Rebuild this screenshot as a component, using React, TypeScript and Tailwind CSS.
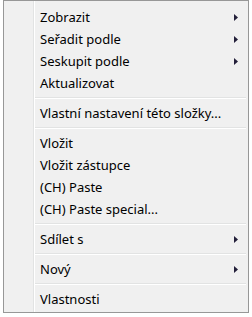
type Item = { label: string; sub?: boolean } | { sep: true };

const items: Item[] = [
  { label: "Zobrazit", sub: true },
  { label: "Seřadit podle", sub: true },
  { label: "Seskupit podle", sub: true },
  { label: "Aktualizovat" },
  { sep: true },
  { label: "Vlastní nastavení této složky..." },
  { sep: true },
  { label: "Vložit" },
  { label: "Vložit zástupce" },
  { label: "(CH) Paste" },
  { label: "(CH) Paste special..." },
  { sep: true },
  { label: "Sdílet s", sub: true },
  { sep: true },
  { label: "Nový", sub: true },
  { sep: true },
  { label: "Vlastnosti" },
];

function Arrow() {
  return (
    <svg width="4" height="7" viewBox="0 0 4 7" className="block">
      <polygon points="0,0 4,3.5 0,7" fill="#231f3a" />
    </svg>
  );
}

export default function App() {
  return (
    <div className="w-[252px] h-[317px] bg-white">
      <div
        className="ml-[3px] w-[246px] h-[313px] border border-[#979797] bg-[#f0f0f0] relative pt-[5px] pb-[2px] text-[13px] text-black"
        style={{ fontFamily: '"Segoe UI", "Noto Sans", sans-serif' }}
      >
        <div className="absolute top-0 bottom-0 left-[29px] w-[1px] bg-[#e2e3e3]" />
        <div className="absolute top-0 bottom-0 left-[30px] w-[1px] bg-white" />
        {items.map((it, i) =>
          "sep" in it ? (
            <div key={i} className="h-[8px] pl-[31px] pr-[2px] flex flex-col pt-[3px]">
              <div className="h-[1px] bg-[#e2e3e3]" />
              <div className="h-[1px] bg-white" />
            </div>
          ) : (
            <div key={i} className="h-[22px] flex items-center pl-[36px] pr-[10px] relative">
              <span className="flex-1 whitespace-nowrap leading-none pt-[1px]">{it.label}</span>
              {it.sub && <Arrow />}
            </div>
          )
        )}
      </div>
    </div>
  );
}
